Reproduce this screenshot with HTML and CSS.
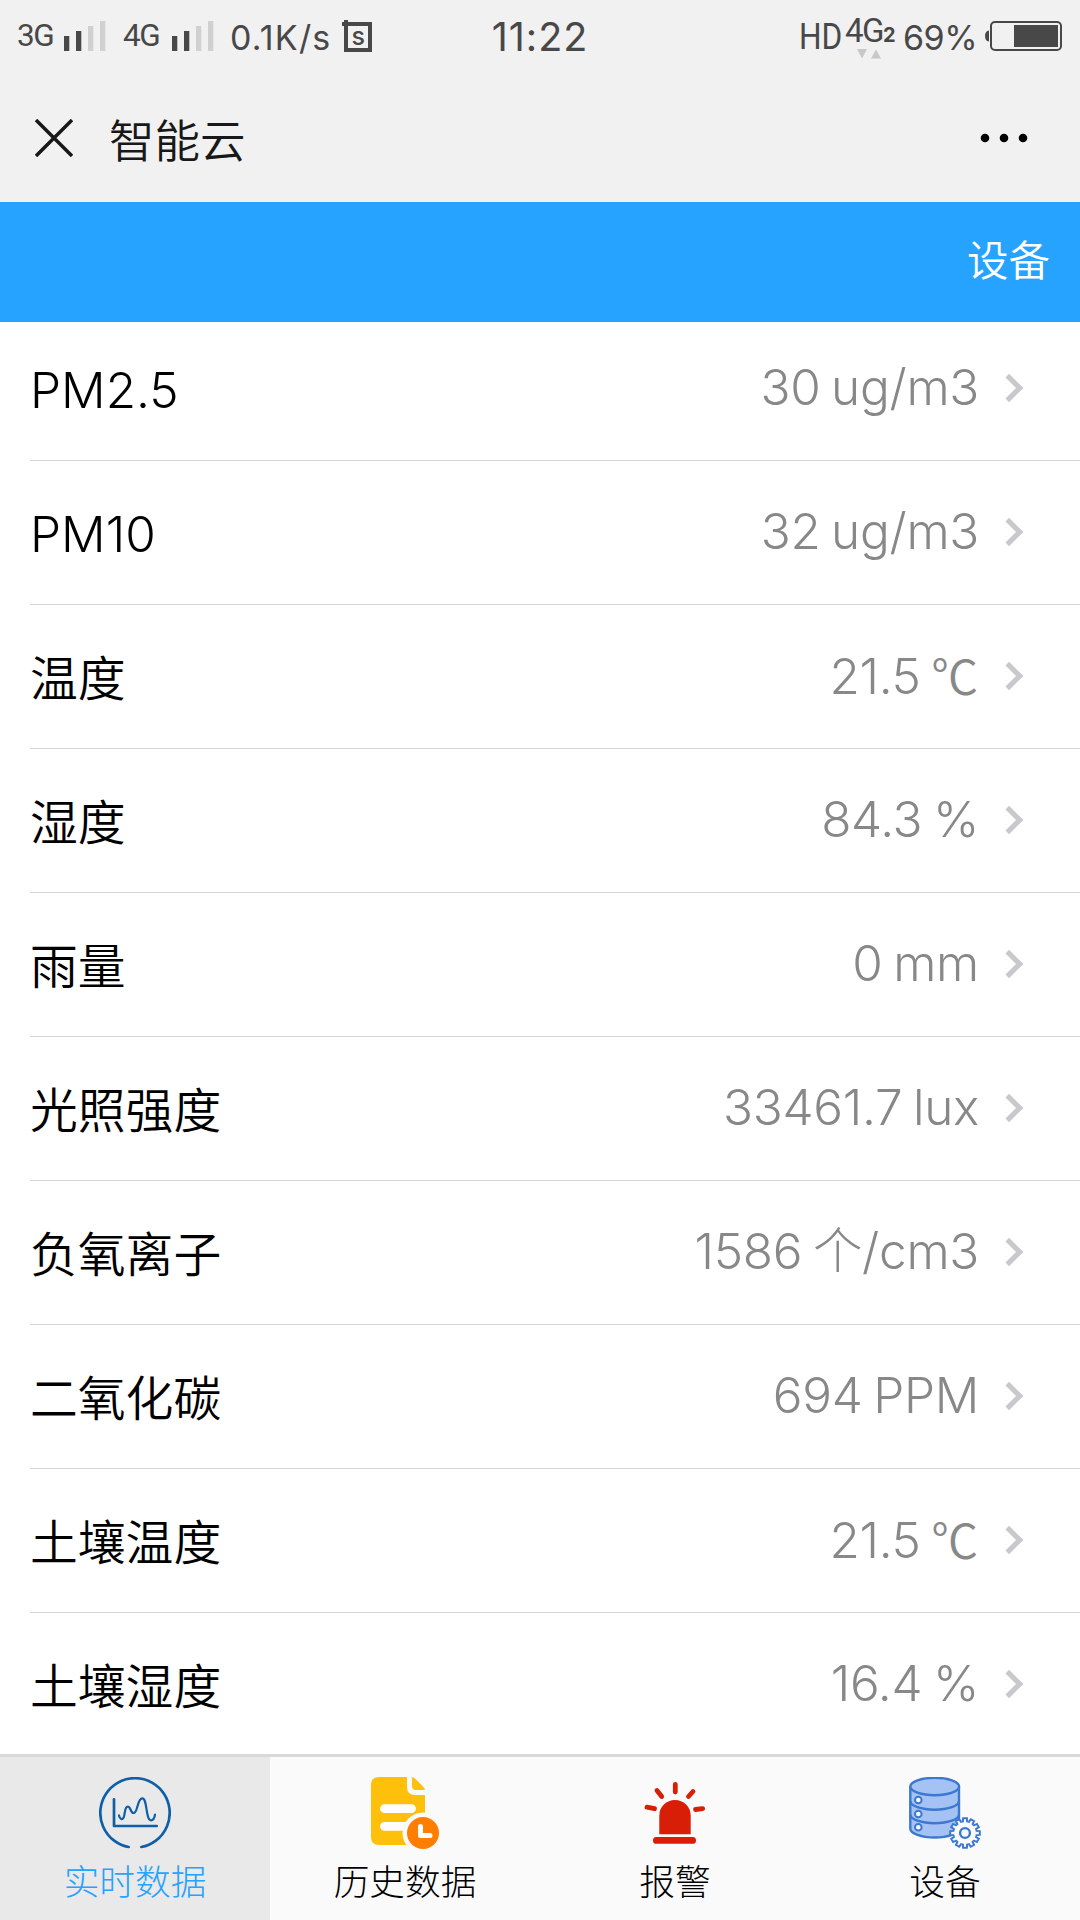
FILE: index.html
```html
<!DOCTYPE html>
<html lang="zh-CN">
<head>
    <meta charset="UTF-8">
    <meta name="viewport" content="width=device-width, initial-scale=1.0">
    <title>智能云</title>
    <link rel="stylesheet" href="styles.css">
</head>
<body>

    <div class="status-bar">
        <div class="status-left">
            <span class="network">3G</span>
            <svg class="signal" width="42" height="31" viewBox="0 0 42 31">
                <path class="on" d="M0 15h5.3v15H0zM12 10h5.3v20H12z"/>
                <path class="off" d="M24 5h5.3v25H24zM36 0h5.3v30H36z"/>
            </svg>
            <span class="network second">4G</span>
            <svg class="signal" width="42" height="31" viewBox="0 0 42 31">
                <path class="on" d="M0 15h5.3v15H0zM12 10h5.3v20H12z"/>
                <path class="off" d="M24 5h5.3v25H24zM36 0h5.3v30H36z"/>
            </svg>
            <span class="speed">0.1K/s</span>
            <svg class="app-icon" width="30" height="32" viewBox="0 0 30 32">
                <path d="M0 4h28v26H4V0" fill="none" stroke="#484848" stroke-width="4"/>
                <text x="9.500" y="24.5">s</text>
            </svg>
        </div>
        <div class="clock">11:22</div>
        <div class="status-right">
            <span class="hd">HD</span>
            <div class="data">
                <div class="data-type">4G<b>2</b></div>
                <svg width="24" height="10" viewBox="0 0 24 10">
                    <path d="M0 0h10L5 9.500zM14 9.500h10L19 .5z" fill="#c8c8c8"/>
                </svg>
            </div>
            <span class="percent">69%</span>
            <svg class="battery" width="78" height="30" viewBox="0 0 78 30">
                <path d="M4 9.500Q0 10 0 15t4 5.500z" fill="#484848"/>
                <rect x="6" y="1" width="70" height="28" rx="4" fill="none" stroke="#484848" stroke-width="2"/>
                <path d="M29 4h44v22H29z" fill="#484848"/>
            </svg>
        </div>
    </div>

    <div class="title-bar">
        <svg class="close" width="38" height="38" viewBox="0 0 38 38">
            <path d="M1 1l36 36M37 1L1 37" stroke="#181818" stroke-width="3.500"/>
        </svg>
        <h1>智能云</h1>
        <svg class="more" width="48" height="10" viewBox="0 0 48 10">
            <circle cx="5" cy="5" r="4.300"/>
            <circle cx="24" cy="5" r="4.300"/>
            <circle cx="43" cy="5" r="4.300"/>
        </svg>
    </div>

    <div class="header"><a>设备</a></div>

    <div class="list">
        <div class="row"><span class="label latin">PM2.5</span><span class="value">30 ug/m3</span><i class="arrow"></i></div>
        <div class="row"><span class="label latin">PM10</span><span class="value">32 ug/m3</span><i class="arrow"></i></div>
        <div class="row"><span class="label">温度</span><span class="value">21.5 <span class="unit">℃</span></span><i class="arrow"></i></div>
        <div class="row"><span class="label">湿度</span><span class="value">84.3 %</span><i class="arrow"></i></div>
        <div class="row"><span class="label">雨量</span><span class="value">0 mm</span><i class="arrow"></i></div>
        <div class="row"><span class="label">光照强度</span><span class="value">33461.7 lux</span><i class="arrow"></i></div>
        <div class="row"><span class="label">负氧离子</span><span class="value">1586 个/cm3</span><i class="arrow"></i></div>
        <div class="row"><span class="label">二氧化碳</span><span class="value">694 PPM</span><i class="arrow"></i></div>
        <div class="row"><span class="label">土壤温度</span><span class="value">21.5 <span class="unit">℃</span></span><i class="arrow"></i></div>
        <div class="row"><span class="label">土壤湿度</span><span class="value">16.4 %</span><i class="arrow"></i></div>
    </div>

    <div class="tabbar">
        <a class="tab active">
            <svg width="72" height="72" viewBox="0 0 72 72" fill="none" stroke="#0f5fa8" stroke-width="2.700" stroke-linecap="round" stroke-linejoin="round">
                <path d="M29.700 70A34.700 34.700 0 1 1 42.300 70"/>
                <path d="M15 22.300V49h42.700"/>
                <path stroke-width="2.200" d="M20 38.300C20.500 42 23.800 44 25 39.500C26.200 35 25.800 29.700 28.700 29.700C32 29.700 31.200 36 34.700 36C39 36 38 21.300 43.300 21.300C48.500 21.300 46.500 43.300 52 43.300C54.500 43.300 55.500 40.500 56 37.700"/>
            </svg>
            <span>实时数据</span>
        </a>
        <a class="tab">
            <svg width="72" height="72" viewBox="0 0 72 72">
                <path d="M10 0h28v10q0 8 8 8h10v50H10q-8 0-8-8V8q0-8 8-8z" fill="#ffc00c"/>
                <path d="M43 0Q45 0 50 5.500Q56 11 56 13H47q-4 0-4-4z" fill="#ffc00c"/>
                <path d="M15.500 31.700h27M15.500 49.300h24" stroke="#fff" stroke-width="8.800" stroke-linecap="round"/>
                <circle cx="54" cy="56" r="20.500" fill="#fafafa"/>
                <circle cx="54" cy="56" r="16" fill="#ff7e00"/>
                <path d="M51.500 49.500v9h9.500" fill="none" stroke="#fff" stroke-width="5" stroke-linecap="round" stroke-linejoin="round"/>
            </svg>
            <span>历史数据</span>
        </a>
        <a class="tab">
            <svg width="72" height="72" viewBox="0 0 72 72" fill="#d81e06">
                <path d="M20.300 57.300V38.700a15.700 15.700 0 0 1 31.400 0v18.600z"/>
                <rect x="14" y="60" width="43" height="6.800" rx="3.400"/>
                <path d="M36.300 7.500v7.500M18 13.500l4.700 6M54 14.500l-4.500 5M8 30.200l7.500 1.500M56.500 32.500l7.200-.9" stroke="#d81e06" stroke-width="4.800" stroke-linecap="round"/>
            </svg>
            <span>报警</span>
        </a>
        <a class="tab">
            <svg width="72" height="72" viewBox="0 0 72 72" fill="#a4c2f4" stroke="#3c78d0" stroke-width="2.400">
                <path d="M1.300 9.500v42c0 5 11 9 24.400 9S50 56.500 50 51.500v-42"/>
                <ellipse cx="25.700" cy="9.500" rx="24.400" ry="8.700"/>
                <path d="M1.300 24c0 5 11 8.700 24.400 8.700S50 29 50 24M1.300 37.500c0 5 11 8.700 24.400 8.700S50 42.500 50 37.500" fill="none"/>
                <g fill="#fafafa" stroke-width="2">
                    <circle cx="9.300" cy="23" r="3.300"/>
                    <circle cx="9.300" cy="37" r="3.300"/>
                    <circle cx="9.300" cy="50.300" r="3.300"/>
                </g>
                <g transform="translate(56 56)" fill="#fafafa" stroke-width="2">
                    <circle r="12" stroke="none"/>
                    <path id="tooth" d="M-3.050-11.400L-2.100-11.600L-1.900-14.800H1.900L2.100-11.600L3.050-11.400"/>
                    <use href="#tooth" transform="rotate(30)"/>
                    <use href="#tooth" transform="rotate(60)"/>
                    <use href="#tooth" transform="rotate(90)"/>
                    <use href="#tooth" transform="rotate(120)"/>
                    <use href="#tooth" transform="rotate(150)"/>
                    <use href="#tooth" transform="rotate(180)"/>
                    <use href="#tooth" transform="rotate(210)"/>
                    <use href="#tooth" transform="rotate(240)"/>
                    <use href="#tooth" transform="rotate(270)"/>
                    <use href="#tooth" transform="rotate(300)"/>
                    <use href="#tooth" transform="rotate(330)"/>
                    <circle r="4.900" stroke-width="2.400"/>
                </g>
            </svg>
            <span>设备</span>
        </a>
    </div>

</body>
</html>
```
FILE: styles.css
```css
* {
    box-sizing: border-box;
}

body {
    margin: 0;
    height: 1920px;
    display: flex;
    flex-direction: column;
    overflow: hidden;
    background-color: #fff;
    color: #000;
    font-family: Inter, "Noto Sans CJK SC", sans-serif;
}

svg {
    display: block;
    flex: none;
}

/* phone status bar */
.status-bar {
    height: 74px;
    flex: none;
    display: grid;
    grid-template-columns: 1fr auto 1fr;
    padding: 0 17px;
    background-color: #f1f1f1;
    color: #484848;
    line-height: 75px;
    white-space: nowrap;
}

.status-left,
.status-right {
    display: flex;
}

.status-right {
    justify-content: flex-end;
}

.network {
    width: 47px;
    font-family: Roboto, sans-serif;
    font-size: 31.500px;
    letter-spacing: -1.500px;
    line-height: 72px;
}

.network.second {
    width: 49px;
    margin-left: 17px;
}

.signal {
    margin-top: 21px;
}

.signal .on {
    fill: #484848;
}

.signal .off {
    fill: #d0d0d0;
}

.speed {
    width: 112px;
    margin-left: 16px;
    font-size: 34px;
    letter-spacing: 1.200px;
}

.app-icon {
    margin-top: 20px;
}

.app-icon text {
    font-size: 25px;
    font-weight: 500;
    fill: #484848;
}

.clock {
    font-size: 39.500px;
    letter-spacing: 1px;
}

.hd {
    width: 42px;
    margin-right: 4px;
    font-family: Roboto, sans-serif;
    font-size: 36px;
    line-height: 74px;
    transform: scaleX(0.88);
    transform-origin: left;
}

.data {
    width: 58px;
    line-height: 30px;
    padding-top: 16px;
}

.data-type {
    font-family: Roboto, sans-serif;
    font-size: 33px;
    letter-spacing: -1.500px;
}

.data-type b {
    font-family: Inter, sans-serif;
    font-size: 20px;
}

.data svg {
    margin: -1px 0 0 12px;
}

.percent {
    width: 82px;
    font-size: 34px;
    letter-spacing: -0.500px;
}

.battery {
    margin-top: 21px;
}

/* title bar */
.title-bar {
    height: 128px;
    flex: none;
    display: flex;
    align-items: center;
    padding: 0 52px 0 35px;
    background-color: #f1f1f1;
}

.title-bar h1 {
    margin: -1px 0 0 36px;
    color: #181818;
    font-size: 45.500px;
    font-weight: 350;
}

.more {
    margin-left: auto;
}

.header {
    position: relative;
    z-index: 1;
    height: 120px;
    flex: none;
    padding-right: 30px;
    background-color: #26a2ff;
    color: #fff;
    font-size: 41.500px;
    font-weight: 350;
    line-height: 118px;
    text-align: right;
}

/* sensor list */
.list {
    flex: 1;
    min-height: 0;
    margin-top: -5px;
    padding-left: 30px;
    overflow: hidden;
}

.row {
    height: 144px;
    display: flex;
    align-items: center;
    border-bottom: 1px solid #d5d5d7;
    line-height: 60px;
}

.label {
    flex: 1;
    font-size: 47.800px;
    font-weight: 350;
    padding-top: 4px;
}

.label.latin {
    font-size: 49.500px;
    font-weight: 300;
    padding-top: 3px;
}

.value {
    color: #888;
    font-size: 49.500px;
    font-weight: 300;
    letter-spacing: -0.300px;
    word-spacing: -3px;
    padding-bottom: 3px;
}

.unit {
    font-family: "Noto Sans CJK SC", sans-serif;
    font-size: 47px;
    font-weight: 350;
    margin-right: 1px;
}

.arrow {
    width: 20px;
    height: 20px;
    margin: -2px 61px 0 20px;
    border: solid #c8c8cd;
    border-width: 5px 5px 0 0;
    transform: rotate(45deg);
}

/* bottom tabs */
.tabbar {
    height: 166px;
    flex: none;
    display: flex;
    border-top: 3px solid #d9d9d9;
    background-color: #fafafa;
}

.tab {
    flex: 1;
    display: flex;
    flex-direction: column;
    align-items: center;
    padding-top: 20px;
    font-size: 35.700px;
    font-weight: 300;
    line-height: 52px;
}

.tab span {
    margin-top: 7px;
}

.tab.active {
    background-color: #e9e9e9;
    color: #26a2ff;
}
```
